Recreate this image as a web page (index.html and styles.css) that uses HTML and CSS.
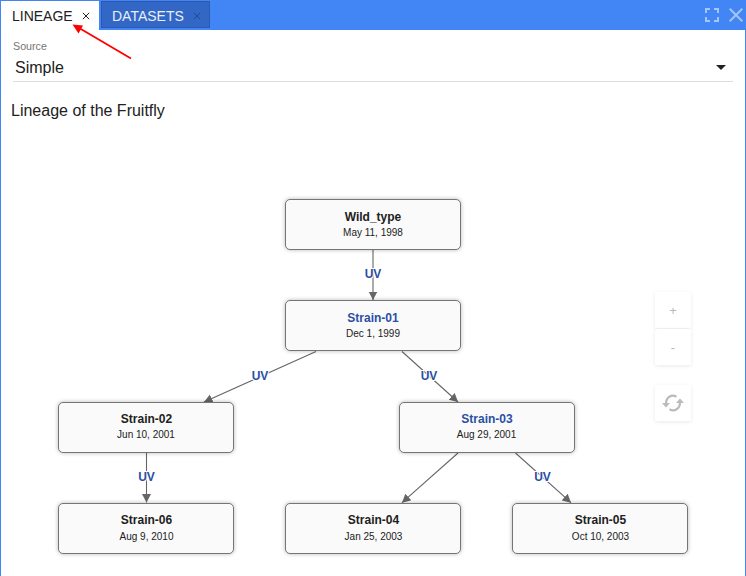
FILE: index.html
```html
<!DOCTYPE html>
<html lang="en">
<head>
<meta charset="utf-8">
<title>Lineage</title>
<link rel="stylesheet" href="styles.css">
</head>
<body>
<div class="window">
  <header class="bar">
    <nav class="tabs">
      <div class="tab tab-active"><span>LINEAGE</span><svg class="x" viewBox="0 0 8 8"><path d="M.8 .8l6.4 6.4M7.2 .8L.8 7.2"/></svg></div>
      <div class="tab tab-idle"><span>DATASETS</span><svg class="x" viewBox="0 0 8 8"><path d="M.8 .8l6.4 6.4M7.2 .8L.8 7.2"/></svg></div>
    </nav>
    <div class="actions">
      <svg width="14" height="14" viewBox="0 0 14 14"><path d="M1 5V1h4M9 1h4v4M13 9v4H9M5 13H1V9"/></svg>
      <svg width="14" height="14" viewBox="0 0 14 14"><path d="M.7 .7l12.6 12.6M13.3 .7L.7 13.3"/></svg>
    </div>
  </header>
  <div class="field">
    <label class="field-label">Source</label>
    <div class="select"><span>Simple</span><i class="caret"></i></div>
  </div>
  <h1 class="title">Lineage of the Fruitfly</h1>
  <main class="canvas">
    <svg class="edges" viewBox="1 130 744 446">
      <defs>
        <marker id="head" markerWidth="9" markerHeight="10" refX="8.5" refY="4.5" orient="auto" markerUnits="userSpaceOnUse"><path d="M0 0L8.5 4.5L0 9z" fill="#666"/></marker>
      </defs>
      <g class="lines">
        <path d="M373 250V300"/>
        <path d="M316 351.500L204 402"/>
        <path d="M402 351.500L458 402"/>
        <path d="M146.500 453V502.500"/>
        <path d="M458 453L402 502.700"/>
        <path d="M515.500 453L571 502.700"/>
      </g>
      <g class="uv">
        <text x="373" y="278">UV</text>
        <text x="260" y="380">UV</text>
        <text x="429" y="379.500">UV</text>
        <text x="146.500" y="481">UV</text>
        <text x="542.500" y="481">UV</text>
      </g>
    </svg>
    <div class="node n0"><b>Wild_type</b><span>May 11, 1998</span></div>
    <div class="node n1 link"><b>Strain-01</b><span>Dec 1, 1999</span></div>
    <div class="node n2"><b>Strain-02</b><span>Jun 10, 2001</span></div>
    <div class="node n3 link"><b>Strain-03</b><span>Aug 29, 2001</span></div>
    <div class="node n6"><b>Strain-06</b><span>Aug 9, 2010</span></div>
    <div class="node n4"><b>Strain-04</b><span>Jan 25, 2003</span></div>
    <div class="node n5"><b>Strain-05</b><span>Oct 10, 2003</span></div>
    <div class="controls">
      <button>+</button>
      <button>-</button>
      <button class="refresh"><svg width="22" height="18" viewBox="0 0 22 18"><path class="arc" d="M14.500 2.700C9.500 -.2 4 3.500 4 9.500M7.500 15.300C12.500 18.200 18 14.500 18 8.500"/><path class="tip" d="M0 9h8l-4 4.500zM14 9h8l-4-4.500z"/></svg></button>
    </div>
  </main>
  <svg class="pointer" width="64" height="38" viewBox="70 22 64 38"><path d="M131 58.500L80 28.500" stroke="#f00" stroke-width="1.800"/><path d="M72.500 24.500L83 25.500L78.500 33.500z" fill="#f00"/></svg>
</div>
</body>
</html>
```

FILE: styles.css
```css
* { box-sizing: border-box; }
body { margin: 0; background: #fff; font-family: "Liberation Sans", Arial, sans-serif; color: #212121; }
.window { position: relative; display: flex; flex-direction: column; width: 746px; height: 576px; border: solid #4285f4; border-width: 0 1px; overflow: hidden; }
.bar { display: flex; justify-content: space-between; flex: none; height: 30px; background: #4285f4; }
.tabs { display: flex; gap: 2px; padding: 1px 0 0; }
.tab { display: flex; align-items: center; font-size: 14px; }
.tab-active { width: 98px; height: 29px; padding: 0 9px 0 11px; background: #fff; justify-content: space-between; }
.tab-idle { width: 109px; height: 27px; padding: 2px 8px 0 10px; background: #3367c5; border: 1px solid #2a5ab4; color: #e8eefa; justify-content: space-between; }
.x { width: 8px; height: 8px; margin-top: 1px; fill: none; stroke: #222; stroke-width: 1; }
.tab-idle .x { stroke: #224a94; margin-top: 1px; }
.actions { display: flex; gap: 10px; padding: 8px 2px 0 0; }
.actions svg { fill: none; stroke: #a4c4fa; stroke-width: 2; }
.field { flex: none; height: 52px; margin: 0 12px; border-bottom: 1px solid #dedede; }
.field-label { display: block; padding-top: 10px; font-size: 10.7px; line-height: 13px; color: #757575; }
.select { display: flex; align-items: center; justify-content: space-between; height: 29px; padding: 0 7px 0 2px; font-size: 16px; }
.caret { border: 5px solid transparent; border-top-color: #222; border-bottom: 0; }
.title { flex: none; height: 48px; margin: 0; padding: 19px 0 0 10px; font-size: 16px; font-weight: 400; line-height: 19px; }
.canvas { position: relative; flex: 1; }
.edges { display: block; width: 744px; height: 446px; }
.lines path { fill: none; stroke: #666; stroke-width: 1.100; marker-end: url(#head); }
.uv text { font-size: 12px; font-weight: 700; text-anchor: middle; fill: #2b4fa3; stroke: #fff; stroke-width: 2px; paint-order: stroke; }
.node { position: absolute; width: 176px; height: 51px; padding-top: 9px; border: 1px solid #757575; border-radius: 5px; background: #fafafa; box-shadow: 0 0 4px rgba(0,0,0,.28); text-align: center; }
.node b, .node span { display: block; }
.node b { font-size: 12px; line-height: 16px; }
.node span { font-size: 10px; line-height: 16px; }
.link b { color: #2b4fa3; }
.n0 { left: 284px; top: 69px; }
.n1 { left: 284px; top: 170px; }
.n2 { left: 57px; top: 272px; }
.n3 { left: 397.500px; top: 272px; }
.n6 { left: 57px; top: 373px; }
.n4 { left: 284px; top: 373px; }
.n5 { left: 511px; top: 373px; }
.n2, .n3, .n4, .n5, .n6 { padding-top: 8px; }
.n2 b, .n3 b { padding-left: 1px; }
.n4 b, .n5 b, .n6 b, .n4 span, .n5 span, .n6 span { padding-left: 1px; }
.n4 b, .n5 b, .n6 b { margin-bottom: 1px; }
.controls { position: absolute; left: 654px; top: 162px; display: flex; flex-direction: column; gap: 1px; }
.controls button { display: flex; align-items: center; justify-content: center; width: 36px; height: 36px; padding: 0; border: 0; border-radius: 2px; background: #fff; box-shadow: 0 1px 4px rgba(0,0,0,.09); color: #b8b8b8; font: 13px "Liberation Sans", Arial, sans-serif; }
.controls .refresh { margin-top: 19px; }
.arc { fill: none; stroke: #bbb; stroke-width: 2.200; }
.tip { fill: #bbb; }
.pointer { position: absolute; left: 69px; top: 22px; fill: none; }
```
